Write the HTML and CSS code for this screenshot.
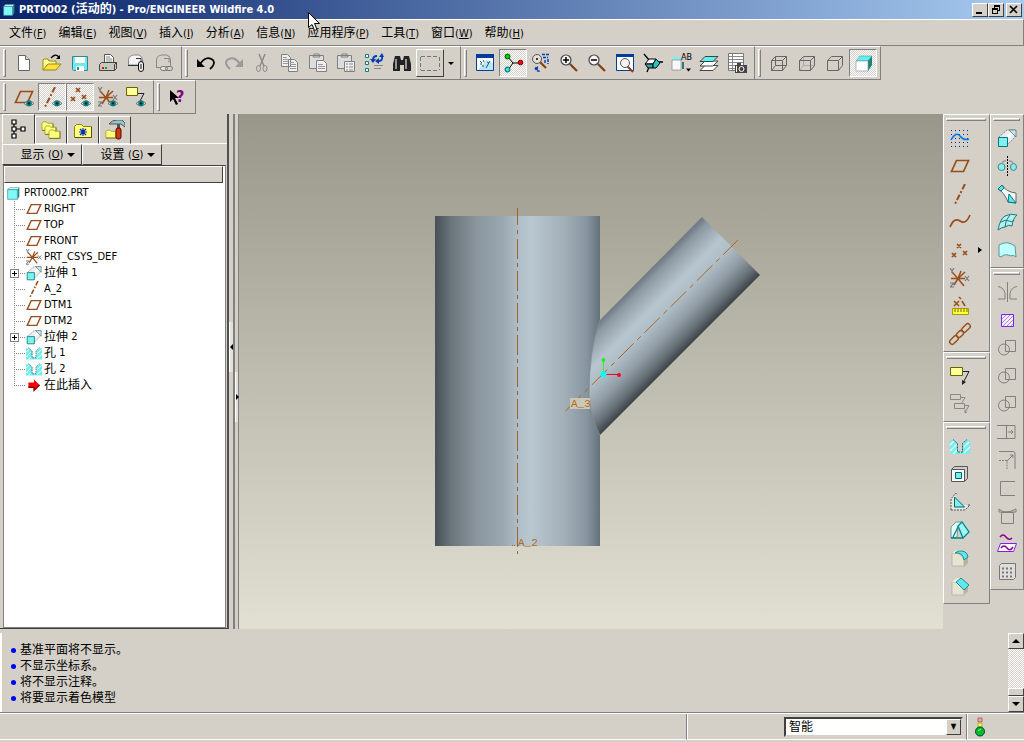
FILE: index.html
```html
<!DOCTYPE html>
<html lang="zh-CN">
<head>
    <meta charset="UTF-8">
    <meta name="viewport" content="width=device-width, initial-scale=1.0">
    <title>PRT0002 (活动的) - Pro/ENGINEER Wildfire 4.0</title>
    <link rel="stylesheet" href="styles.css">
</head>
<body>
    <!-- shared icons -->
    <svg class="sprites" aria-hidden="true">
        <symbol id="eye" viewBox="0 0 10 7"><path d="M0 3.5Q5-2 10 3.5Q5 8 0 3.5" fill="#c8dcd8" stroke="#555" stroke-width=".7"/><circle cx="5" cy="3.4" r="2.8" fill="#008080"/><circle cx="5" cy="3.4" r="1.2" fill="#002828"/></symbol>
        <symbol id="plane" viewBox="0 0 20 20"><path d="M6.500 4.500H18.500L13.500 15.500H1.500Z" fill="none" stroke="#994d1a" stroke-width="1.700"/></symbol>
        <symbol id="axis" viewBox="0 0 20 20"><path d="M15 0L5 20" fill="none" stroke="#994d1a" stroke-width="2" stroke-dasharray="6 2 2 2"/></symbol>
        <symbol id="points" viewBox="0 0 20 20"><path d="M7 2l4 4m0-4l-4 4M2 11l4 4m0-4l-4 4M13 9l4 4m0-4l-4 4" fill="none" stroke="#994d1a" stroke-width="1.700"/></symbol>
        <symbol id="csys" viewBox="0 0 20 20"><path d="M1 10.500H15M11 3L8 10.500L14 18M2 4L8 10.500L4 17M15 4L8 10.500" fill="none" stroke="#994d1a" stroke-width="1.500"/><path d="M0 0l2 3 2-3M2 3v2M15 8l4 5m0-5l-4 5M0 15h4l-4 4h4" fill="none" stroke="#777" stroke-width="1.200"/></symbol>
        <symbol id="note" viewBox="0 0 20 20"><path d="M.500 1.500h12v8h-12z" fill="#ffff99" stroke="#666600"/><path d="M13 5.500h6L13 17" fill="none" stroke="#222"/><path d="M12 19l0-5 4 2z" fill="#222"/></symbol>
        <symbol id="extrude" viewBox="0 0 20 20"><path d="M2 9l8-7h8v7l-7 7" fill="#e8eeee" stroke="#888" stroke-dasharray="2 1"/><path d="M11 9l6-6" stroke="#fff" stroke-width="3"/><path d="M12 2h7v7z" fill="#b8f0f0" stroke="#667" stroke-width=".8"/><path d="M1.500 9.500h9v9h-9z" fill="#80f0f0" stroke="#007878"/></symbol>
        <symbol id="hole" viewBox="0 0 20 20"><path d="M0 4h4l4 4v8h5V8l4-4h3v14H0z" fill="#70f0f0"/><path d="M0 9l4-4M0 15l7-7M3 18l4-4M14 11l5-5M14 17l6-6" stroke="#fff" stroke-width="1.200"/><path d="M3 3.500l4.500 4V16h5V7.500l4.500-4" fill="none" stroke="#356" stroke-dasharray="2 1"/></symbol>
        <symbol id="lens" viewBox="0 0 20 20"><path d="M11 11l7 7" stroke="#8b3a0e" stroke-width="2.200"/><path d="M11 11l2 2" stroke="#555" stroke-width="1.500"/><circle cx="7" cy="7" r="5" fill="#f4f4f4" stroke="#444" stroke-width="1.200"/></symbol>
        <symbol id="folder" viewBox="0 0 20 20"><path d="M1.500 17.500v-11l2-2h5l2 2h8v11z" fill="#ffff80" stroke="#888800"/><path d="M18.500 7v10.500H2" fill="none" stroke="#555500"/></symbol>
        <symbol id="pages" viewBox="0 0 20 20"><path d="M1.500 1.500h6l3 3v9h-9zM8.500 6.500h6l3 3v9h-9z" fill="#eee" stroke="#808080"/><path d="M3 4.500h4M3 6.500h5M3 8.500h5M3 10.500h5M10 9.500h4M10 11.500h6M10 13.500h6M10 15.500h6" stroke="#999"/></symbol>
        <symbol id="boolean" viewBox="0 0 20 20"><path d="M8.500 2.500h10v11h-10zM1.500 11.500a5.500 5.500 0 1 0 11 0a5.500 5.500 0 1 0-11 0" fill="none" stroke="#808080"/></symbol>
        <symbol id="cube" viewBox="0 0 20 20"><path d="M1 4l3-3h15l-3 3z" fill="#d8ffff" stroke="#388" stroke-width=".8"/><path d="M16 4l3-3v14l-3 4z" fill="#308888"/><path d="M1 4h15v15H1z" fill="#80f8f8" stroke="#388"/></symbol>
    </svg>

    <header class="titlebar">
        <svg class="app-icon" viewBox="0 0 20 20"><use href="#cube"/></svg>
        <h1>PRT0002 (<span>活动的</span>) - Pro/ENGINEER Wildfire 4.0</h1>
        <div class="window-buttons">
            <button aria-label="最小化"><svg viewBox="0 0 14 12"><path d="M3 8h6v2H3z"/></svg></button>
            <button aria-label="还原"><svg viewBox="0 0 14 12"><path d="M5 1h6v6H9V6h1V3H6v1H5zM3 4h6v6H3zm1 2v3h4V6z" fill-rule="evenodd"/></svg></button>
            <button aria-label="关闭" class="close"><svg viewBox="0 0 14 12"><path d="M3 2l7 7M10 2L3 9" stroke="#000" stroke-width="1.700"/></svg></button>
        </div>
    </header>

    <nav class="menubar">
        <a href="#">文件<span>(<u>F</u>)</span></a>
        <a href="#">编辑<span>(<u>E</u>)</span></a>
        <a href="#">视图<span>(<u>V</u>)</span></a>
        <a href="#">插入<span>(<u>I</u>)</span></a>
        <a href="#">分析<span>(<u>A</u>)</span></a>
        <a href="#">信息<span>(<u>N</u>)</span></a>
        <a href="#">应用程序<span>(<u>P</u>)</span></a>
        <a href="#">工具<span>(<u>T</u>)</span></a>
        <a href="#">窗口<span>(<u>W</u>)</span></a>
        <a href="#">帮助<span>(<u>H</u>)</span></a>
    </nav>

    <div class="toolbar-row">
        <div class="toolbar">
            <button class="tool" aria-label="新建"><svg viewBox="0 0 20 20"><path d="M4.500 2.500h7l4 4v11h-11z" fill="#fff" stroke="#666"/><path d="M11.500 2.500v4h4" fill="#ddd" stroke="#666"/></svg></button>
            <button class="tool" aria-label="打开"><svg viewBox="0 0 20 20"><path d="M1 17V7l1-1h4l1 2h7v3" fill="#ffff99" stroke="#998800"/><path d="M1 17l5-6h13l-5 6z" fill="#ffe040" stroke="#998800"/><path d="M9 5q4-5 8-1" fill="none" stroke="#000" stroke-width="1.300"/><path d="M14 6h4V2z"/></svg></button>
            <button class="tool" aria-label="保存"><svg viewBox="0 0 20 20"><path d="M2.500 3.500h15v14h-14l-1-1z" fill="#70e8f0" stroke="#388"/><path d="M5 4h10v6H5zM6 13h8v5H6z" fill="#fff"/><path d="M7 14h2v3H7z" fill="#388"/></svg></button>
            <button class="tool" aria-label="打印"><svg viewBox="0 0 20 20"><path d="M6.500 1.500h6l3 3v7h-9z" fill="#fff" stroke="#555"/><path d="M8 4h4M8 6h6M8 8h6" stroke="#888"/><path d="M1.500 11.500l2-2h15l-2 2v6h-15zM16.500 11.500l2-2v6l-2 2" fill="#c8c8c0" stroke="#444"/><path d="M4 14h2v2H4z" fill="#f00"/><path d="M7 14h2v2H7z" fill="#0a0"/></svg></button>
            <button class="tool" aria-label="发送邮件"><svg viewBox="0 0 20 20"><path d="M2.500 12V7q0-4 5-5h5q4 1 4 5v5z" fill="#f4f4f4" stroke="#888"/><path d="M2 12.500h11" stroke="#333"/><path d="M10 5.500h5v3" fill="none" stroke="#333"/><rect x="12.500" y="8.500" width="5" height="10" rx="2.500" fill="#eee" stroke="#111"/><path d="M15 11v5" stroke="#111"/></svg></button>
            <button class="tool" aria-label="发送链接"><svg viewBox="0 0 20 20"><path d="M2.500 14V7q0-4 5-5h5q4 1 4 5v6M2 14.500h6M10 5.500h5v4" fill="none" stroke="#888"/><rect x="6.500" y="13.500" width="7" height="4" rx="2" fill="#ddd" stroke="#777"/><rect x="11.500" y="13.500" width="7" height="4" rx="2" fill="none" stroke="#777"/></svg></button>
        </div>
        <div class="toolbar">
            <button class="tool" aria-label="撤消"><svg viewBox="0 0 20 20"><path d="M4 11Q10 2 17 7Q20 11 14 16" fill="none" stroke="#000" stroke-width="1.700"/><path d="M1 6v8h8z"/></svg></button>
            <button class="tool" aria-label="重做"><svg viewBox="0 0 20 20"><path d="M16 11Q10 2 3 7Q0 11 6 16" fill="none" stroke="#999" stroke-width="2"/><path d="M19 6v8h-8z" fill="#999"/></svg></button>
            <button class="tool" aria-label="剪切"><svg viewBox="0 0 20 20"><path d="M7 1l5 12M13 1L8 13" stroke="#888" stroke-width="1.400"/><ellipse cx="6.500" cy="15.500" rx="2" ry="3" fill="none" stroke="#888"/><ellipse cx="13" cy="15.500" rx="2" ry="3" fill="none" stroke="#888"/></svg></button>
            <button class="tool" aria-label="复制"><svg viewBox="0 0 20 20"><use href="#pages"/></svg></button>
            <button class="tool" aria-label="粘贴"><svg viewBox="0 0 20 20"><path d="M1.500 2.500h14v13h-14zM5 4l1-3h5l1 3z" fill="#ddd" stroke="#808080"/><path d="M8.500 7.500h7l3 3v8h-10z" fill="#eee" stroke="#808080"/><path d="M10 11.500h5M10 13.500h7M10 15.500h7" stroke="#999"/></svg></button>
            <button class="tool" aria-label="选择性粘贴"><svg viewBox="0 0 20 20"><path d="M1.500 2.500h14v13h-14zM5 4l1-3h5l1 3z" fill="#ddd" stroke="#808080"/><path d="M8.500 8.500h10v10h-10z" fill="#eee" stroke="#808080"/><path d="M10 11h2M10 14h2M10 17h2M13 11h4M13 14h4M13 17h4" stroke="#888"/></svg></button>
            <button class="tool" aria-label="再生"><svg viewBox="0 0 20 20"><path d="M1.500 1.500h3v3h-3zM1.500 8.500h3v3h-3zM1.500 15.500h3v3h-3z" fill="#fff" stroke="#008080"/><path d="M9 7q0-4 4-4M18 3q1 5-3 5" fill="none" stroke="#003cb4" stroke-width="1.800"/><path d="M6 6h6l-3 4zM15 5v6l-4-3zM15 4h5l-2-4z" fill="#003cb4"/><path d="M10 12.500h9M10 15.500h7" stroke="#888"/></svg></button>
            <button class="tool" aria-label="查找"><svg viewBox="0 0 20 20"><path d="M3 3h5l1 4h2l1-4h5l2 8v7h-7v-6H8v6H1v-7z" fill="#222"/><path d="M4 6v10M14 6v10" stroke="#bbb" stroke-width="1.500"/></svg></button>
            <button class="tool raised" aria-label="选取框"><svg viewBox="0 0 20 20"><path d="M1 3.500h18M1 17.500h18M.500 4v13M19.500 4v13" fill="none" stroke="#777" stroke-dasharray="4 2"/></svg></button>
            <button class="drop" aria-label="选取选项"><i class="arrow-down"></i></button>
        </div>
        <div class="toolbar">
            <button class="tool" aria-label="重画"><svg viewBox="0 0 20 20"><path d="M1.500 1.500h17v16h-17z" fill="#fff" stroke="#003ca0"/><path d="M1 1h18v4H1z" fill="#003ca0"/><path d="M3 17l8-10q6 2 7 4v6z" fill="#b8e8f8"/><path d="M5 8l2 2M8 7l1 2M11 15l4-7M5 11h2M12 9l2 1M7 13h2" stroke="#258"/></svg></button>
            <button class="tool pressed" aria-label="旋转中心"><svg viewBox="0 0 20 20"><path d="M5 4l5 6h8M10 10l-5 7" fill="none" stroke="#000"/><circle cx="4.500" cy="3.500" r="2.500" fill="#0c0" stroke="#050"/><circle cx="17.500" cy="9.500" r="2.300" fill="#f00" stroke="#700"/><circle cx="4.500" cy="16.500" r="2.500" fill="#3dd" stroke="#066"/></svg></button>
            <button class="tool" aria-label="定向模式"><svg viewBox="0 0 20 20"><path d="M9 9l6 6" stroke="#8b4010" stroke-width="2.200"/><circle cx="6" cy="6" r="4.500" fill="#e4e0d8" stroke="#555"/><circle cx="6" cy="6" r="1"/><path d="M11 1.500h7M12 4.500h5M17 6v5M14 7v3M5 14q-1 5 5 4" fill="none" stroke="#003cb4" stroke-width="1.400" stroke-dasharray="3 1"/><path d="M3 16l4-3v4z" fill="#003cb4"/></svg></button>
            <button class="tool" aria-label="放大"><svg viewBox="0 0 20 20"><use href="#lens"/><path d="M4 7h6M7 4v6" stroke="#000" stroke-width="1.500"/></svg></button>
            <button class="tool" aria-label="缩小"><svg viewBox="0 0 20 20"><use href="#lens"/><path d="M4 7h6" stroke="#000" stroke-width="1.500"/></svg></button>
            <button class="tool" aria-label="重新调整"><svg viewBox="0 0 20 20"><path d="M1.500 1.500h17v16h-17z" fill="#fff" stroke="#003ca0"/><path d="M1 1h18v3H1z" fill="#003ca0"/><path d="M12 13l6 6" stroke="#8b4010" stroke-width="2"/><circle cx="10" cy="10" r="4.500" fill="#f4f4f4" stroke="#555"/></svg></button>
            <button class="tool" aria-label="视图方向"><svg viewBox="0 0 20 20"><path d="M1 1l5 6M14 9h6M6 14l-2 5" stroke="#000" stroke-width="1.300"/><path d="M2 11l4-5h7l-3 5z" fill="#fff" stroke="#000"/><path d="M2 11h8v4H5z" fill="#40a0a0" stroke="#000"/><path d="M10 11l3-5 4 4-4 5h-3z" fill="#20c8c8" stroke="#000"/></svg></button>
            <button class="tool" aria-label="已命名的视图"><svg viewBox="0 0 20 20"><path d="M1 6l2-2h7v3H1z" fill="#80f0f0"/><path d="M1 7h9v10H1z" fill="#f8f8f8" stroke="#888" stroke-width=".7"/><path d="M12 9v7" stroke="#377" stroke-width="2"/><path d="M15 15.500h5l-2.500 3z"/><text x="10" y="7" class="tiny-text">AB</text></svg></button>
            <button class="tool" aria-label="层"><svg viewBox="0 0 20 20"><g stroke="#333" stroke-width=".9"><path d="M1 17.500l5-5h13l-5 5z" fill="#fff"/><path d="M1 13l5-5h13l-5 5z" fill="#fff"/><path d="M1 8.500l5-5h13l-5 5z" fill="#60f0f0"/></g></svg></button>
            <button class="tool" aria-label="视图管理器"><svg viewBox="0 0 20 20"><path d="M1.500 .500h15v17h-15z" fill="#fff" stroke="#777"/><path d="M2 3.500h14M2 6.500h14M2 9.500h14M2 12.500h6M2 15.500h6M5.500 1v16" stroke="#888"/><path d="M8 12h12v8H8zM10 10h4v2h-4z" fill="#444"/><circle cx="14.500" cy="16" r="2.500" fill="#444" stroke="#fff"/><path d="M9.500 13v6" stroke="#ffc"/></svg></button>
        </div>
        <div class="toolbar">
            <button class="tool" aria-label="线框"><svg viewBox="0 0 20 20"><path d="M2.500 7.500h11v10h-11zM6.500 3.500h11v9h-11zM2.500 7.500l4-4M13.500 7.500l4-4M13.500 17.500l4-5M2.500 17.500l4-5" fill="none" stroke="#666"/></svg></button>
            <button class="tool" aria-label="隐藏线"><svg viewBox="0 0 20 20"><path d="M6.500 4v8.500h11M2.500 17.500l4-5" fill="none" stroke="#aaa"/><path d="M2.500 7.500h11v10h-11zM2.500 7.500l4-4h11v9l-4 5M13.500 7.500l4-4" fill="none" stroke="#666"/></svg></button>
            <button class="tool" aria-label="无隐藏线"><svg viewBox="0 0 20 20"><path d="M2.500 7.500h11v10h-11zM2.500 7.500l4-4h11v9l-4 5M13.500 7.500l4-4" fill="none" stroke="#666"/></svg></button>
            <button class="tool pressed" aria-label="着色"><svg viewBox="0 0 20 20"><path d="M3 8l4-5h12l-4 5z" fill="#60f0f0" stroke="#599" stroke-width=".6"/><path d="M15 8l4-5v9l-4 6z" fill="#208080"/><path d="M3 8h12v10H3z" fill="#fff" stroke="#799" stroke-width=".6"/></svg></button>
        </div>
    </div>

    <div class="toolbar-row">
        <div class="toolbar">
            <button class="tool" aria-label="基准平面显示"><svg viewBox="0 0 20 20"><use href="#plane"/><use href="#eye" x="10" y="13" width="10" height="7"/></svg></button>
            <button class="tool pressed" aria-label="基准轴显示"><svg viewBox="0 0 20 20"><use href="#axis" x="-2" y="0" width="20" height="20"/><use href="#eye" x="10" y="13" width="10" height="7"/></svg></button>
            <button class="tool pressed" aria-label="基准点显示"><svg viewBox="0 0 20 20"><use href="#points" x="-1" y="-1" width="20" height="20"/><use href="#eye" x="11" y="13" width="10" height="7"/></svg></button>
            <button class="tool" aria-label="坐标系显示"><svg viewBox="0 0 20 20"><use href="#csys"/><use href="#eye" x="10" y="13" width="10" height="7"/></svg></button>
            <button class="tool" aria-label="注释显示"><svg viewBox="0 0 20 20"><path d="M.500 .500h11v8h-11z" fill="#ffff99" stroke="#666600"/><path d="M12 6.500h6L14 14" fill="none" stroke="#222"/><use href="#eye" x="10" y="13" width="10" height="7"/></svg></button>
        </div>
        <div class="toolbar">
            <button class="tool" aria-label="上下文帮助"><svg viewBox="0 0 20 20"><path d="M2 3v12l3-3 3 6 2-1-3-6h4z"/><text x="8" y="15" class="help-text">?</text></svg></button>
        </div>
    </div>

    <main class="workspace">
        <aside class="navigator">
            <div class="tabs">
                <button class="tab active" aria-label="模型树"><svg viewBox="0 0 20 20"><path d="M3 1h4v4H3zM3 8h4v4H3zM3 15h4v4H3zM12 8h4v4h-4zM7 10h5M5 5v3M5 12v3" fill="#fff" stroke="#000" stroke-width="1.200"/></svg></button>
                <button class="tab" aria-label="层树"><svg viewBox="0 0 20 20"><use href="#folder" x="0" y="-1" width="13" height="13"/><use href="#folder" x="3" y="3" width="13" height="13"/><use href="#folder" x="7" y="7" width="13" height="13"/></svg></button>
                <button class="tab" aria-label="文件夹浏览器"><svg viewBox="0 0 20 20"><use href="#folder"/><path d="M6 12h8M10 8v8M7 9l6 6M13 9l-6 6" stroke="#0028b4" stroke-width="1.200"/></svg></button>
                <button class="tab" aria-label="连接"><svg viewBox="0 0 20 20"><use href="#folder" x="0" y="7" width="12" height="13"/><path d="M4 4q3-4 8-4h5l3 3v4l-4-3H9z" fill="#90c8d0" stroke="#555"/><path d="M12 4h3v5h-3z" fill="#555"/><rect x="11" y="8" width="5" height="11" rx="2" fill="#c84010" stroke="#600"/></svg></button>
            </div>
            <div class="tree-menus">
                <button>显示 <span>(<u>O</u>)</span><i class="arrow-down big"></i></button>
                <button>设置 <span>(<u>G</u>)</span><i class="arrow-down big"></i></button>
            </div>
            <div class="tree-box">
                <div class="tree-header"></div>
                <ul class="tree">
                    <li class="root"><svg viewBox="0 0 20 20"><use href="#cube"/></svg>PRT0002.PRT</li>
                    <li><span class="branch"></span><svg viewBox="0 0 20 20"><use href="#plane"/></svg>RIGHT</li>
                    <li><span class="branch"></span><svg viewBox="0 0 20 20"><use href="#plane"/></svg>TOP</li>
                    <li><span class="branch"></span><svg viewBox="0 0 20 20"><use href="#plane"/></svg>FRONT</li>
                    <li><span class="branch"></span><svg viewBox="0 0 20 20"><use href="#csys"/></svg>PRT_CSYS_DEF</li>
                    <li><span class="branch"><button class="expand" aria-label="展开"></button></span><svg viewBox="0 0 20 20"><use href="#extrude"/></svg><b>拉伸</b> 1</li>
                    <li><span class="branch"></span><svg viewBox="0 0 20 20"><use href="#axis"/></svg>A_2</li>
                    <li><span class="branch"></span><svg viewBox="0 0 20 20"><use href="#plane"/></svg>DTM1</li>
                    <li><span class="branch"></span><svg viewBox="0 0 20 20"><use href="#plane"/></svg>DTM2</li>
                    <li><span class="branch"><button class="expand" aria-label="展开"></button></span><svg viewBox="0 0 20 20"><use href="#extrude"/></svg><b>拉伸</b> 2</li>
                    <li><span class="branch"></span><svg viewBox="0 0 20 20"><use href="#hole"/></svg><b>孔</b> 1</li>
                    <li><span class="branch"></span><svg viewBox="0 0 20 20"><use href="#hole"/></svg><b>孔</b> 2</li>
                    <li><span class="branch last"></span><svg viewBox="0 0 20 20"><path d="M3 7h7V3l7 7-7 7v-4H3z" fill="#f00"/><path d="M3 13h7v4l7-7" fill="none" stroke="#700" stroke-width="1.500"/></svg><b>在此插入</b></li>
                </ul>
            </div>
        </aside>

        <div class="splitter">
            <div class="strip left"><button aria-label="收起导航器"><svg viewBox="0 0 4 8"><path d="M4 0v8L0 4z"/></svg></button></div>
            <div class="strip right"><button aria-label="展开浏览器"><svg viewBox="0 0 4 8"><path d="M0 0v8l4-4z"/></svg></button></div>
        </div>

        <section class="viewport">
            <svg class="model" viewBox="239 114 704 515" role="img" aria-label="三维模型">
                <defs>
                    <linearGradient id="pipe">
                        <stop offset="0" stop-color="#485055"/><stop offset=".1" stop-color="#6b757b"/>
                        <stop offset=".25" stop-color="#8a959d"/><stop offset=".42" stop-color="#9ca9b3"/>
                        <stop offset=".52" stop-color="#b2c0ca"/><stop offset=".58" stop-color="#b9c7d1"/>
                        <stop offset=".78" stop-color="#a3b0b8"/><stop offset=".92" stop-color="#8795a0"/>
                        <stop offset="1" stop-color="#66727a"/>
                    </linearGradient>
                    <linearGradient id="arm" gradientUnits="userSpaceOnUse" x1="702" y1="217" x2="760" y2="275">
                        <stop offset="0" stop-color="#6c7780"/><stop offset=".1" stop-color="#8d9aa3"/>
                        <stop offset=".35" stop-color="#b7c5cf"/><stop offset=".5" stop-color="#b0bec8"/>
                        <stop offset=".7" stop-color="#939fa8"/><stop offset=".88" stop-color="#667077"/>
                        <stop offset="1" stop-color="#3b4347"/>
                    </linearGradient>
                </defs>
                <path d="M435 216H600V546H435Z" fill="url(#pipe)"/>
                <path d="M702 217L760 275L600 435Q591 420 589 395Q589 350 600 320Z" fill="url(#arm)"/>
                <path d="M600 320Q589 350 589 395Q591 420 600 435" fill="none" stroke="#7f8d98" stroke-width=".8"/>
                <path d="M517.500 208V554" stroke="#a0662c" stroke-dasharray="17 5 4 5 20 4 4 4 20 4 4 4 20 4 4 4 20 4 4 4 20 4 4 4 20 4 4 4 20 4 4 4 20 4 4 4 20 4 4 4 20 4 4 4"/>
                <path d="M565.500 411L738 240" stroke="#a8661f" stroke-dasharray="22 5 5 5"/>
                <path d="M570 398h20v11h-20z" fill="#ccc6b6"/>
                <text x="571" y="407" class="axis-label">A_3</text>
                <text x="518" y="546" class="axis-label">A_2</text>
                <path d="M512 545.500h4" stroke="#a8661f" stroke-dasharray="1 1"/>
                <path d="M603.500 374V360" stroke="#3e3"/><circle cx="603.500" cy="360" r="2" fill="#2e2"/>
                <path d="M604 374.500h15" stroke="#f02"/><circle cx="619" cy="375" r="2" fill="#f02"/>
                <circle cx="603.500" cy="374.500" r="3" fill="#0ff"/>
            </svg>
        </section>

        <div class="side-column wide">
            <div class="side-bar">
                <button class="tool" aria-label="草绘"><svg viewBox="0 0 20 20"><path d="M1 2.500h18M1 6.500h18M1 10.500h18M1 14.500h18M1 18.500h18" stroke="#0028a0" stroke-dasharray="1 3"/><path d="M1 12q5-9 9-4t9 3" fill="none" stroke="#0078f0" stroke-width="1.500"/></svg></button>
                <button class="tool" aria-label="基准平面"><svg viewBox="0 0 20 20"><use href="#plane"/></svg></button>
                <button class="tool" aria-label="基准轴"><svg viewBox="0 0 20 20"><use href="#axis"/></svg></button>
                <button class="tool" aria-label="基准曲线"><svg viewBox="0 0 20 20"><path d="M0 15Q4 5 10 9T20 3" fill="none" stroke="#994d1a" stroke-width="1.600"/></svg></button>
                <div class="tool-pair"><button class="tool" aria-label="基准点"><svg viewBox="0 0 20 20"><use href="#points" y="2" width="20" height="20"/></svg></button><button class="flyout" aria-label="更多基准点"><svg viewBox="0 0 4 6"><path d="M0 0v6l4-3z"/></svg></button></div>
                <button class="tool" aria-label="坐标系"><svg viewBox="0 0 20 20"><use href="#csys"/></svg></button>
                <button class="tool" aria-label="分析特征"><svg viewBox="0 0 20 20"><path d="M4 5l5 5m0-5l-5 5M9 1l2 2M12 5l3 5" stroke="#994d1a" stroke-width="1.500"/><path d="M2.500 12.500h16v6h-16z" fill="#ffff40" stroke="#aa9900"/><path d="M5 13v3M8 13v3M11 13v3M14 13v3M17 13v3" stroke="#660"/></svg></button>
                <button class="tool" aria-label="参照"><svg viewBox="0 0 20 20"><g fill="none" stroke="#994d1a" stroke-width="1.400"><rect x="-5" y="-2.500" width="10" height="5" rx="2.500" transform="translate(4 16) rotate(-45)"/><rect x="-4" y="-2.500" width="8" height="5" rx="2.500" transform="translate(10 10) rotate(-45)"/><rect x="-5" y="-2.500" width="10" height="5" rx="2.500" transform="translate(16 4) rotate(-45)"/></g></svg></button>
            </div>
            <div class="side-bar">
                <button class="tool" aria-label="注释"><svg viewBox="0 0 20 20"><use href="#note"/></svg></button>
                <button class="tool" aria-label="注释传播"><svg viewBox="0 0 20 20"><path d="M.500 .500h10v5h-10zM4.500 9.500h10v5h-10zM11 3.500h4l-3 5M15 11.500h4l-4 7m0-3v3h2" fill="none" stroke="#888"/></svg></button>
            </div>
            <div class="side-bar">
                <button class="tool" aria-label="孔"><svg viewBox="0 0 20 20"><use href="#hole"/></svg></button>
                <button class="tool" aria-label="壳"><svg viewBox="0 0 20 20"><path d="M1.500 5.500l3-3h13v12l-3 3" fill="#ccc" stroke="#555"/><path d="M1.500 5.500h13v12h-13z" fill="#fff" stroke="#555"/><path d="M5.500 8.500h6v6h-6z" fill="#70f0f0" stroke="#066"/></svg></button>
                <button class="tool" aria-label="筋"><svg viewBox="0 0 20 20"><path d="M1 18V7l5-6v12h13l-4 5z" fill="#e6e6e0"/><path d="M1 18V7l5-6v2M1 18h14l5-5h-3" fill="none" stroke="#555" stroke-dasharray="2 1"/><path d="M4.500 5l10 10h-10z" fill="#80f0f0" stroke="#066"/></svg></button>
                <button class="tool" aria-label="拔模"><svg viewBox="0 0 20 20"><path d="M1 18V7l5-5h6l-4 4-1 11z" fill="#eafafa" stroke="#699"/><path d="M8 6l4-4 7 10-6 6z" fill="#a0f4f4" stroke="#088" stroke-width="1.300"/><path d="M1 18h12M8 7l-5 10" fill="none" stroke="#088" stroke-width="1.300"/></svg></button>
                <button class="tool" aria-label="倒圆角"><svg viewBox="0 0 20 20"><path d="M2 5q8-1 12 6v7H2z" fill="#e6e4d0" stroke="#aaa" stroke-width=".7"/><path d="M14 11l4-2v6l-4 4z" fill="#b4b29c"/><path d="M2 5l5-3h5l-4 3z" fill="#f2f0e0"/><path d="M8 3q9-1 10 6l-4 3q-1-8-9-7z" fill="#60e8f0" stroke="#077" stroke-width=".8"/></svg></button>
                <button class="tool" aria-label="倒角"><svg viewBox="0 0 20 20"><path d="M2 6h4l8 7v6H2z" fill="#e6e4d0" stroke="#aaa" stroke-width=".7"/><path d="M14 13l4-4v6l-4 4z" fill="#b4b29c"/><path d="M2 6l5-4h4L7 6z" fill="#f2f0e0"/><path d="M11 2l8 7-5 5-8-8z" fill="#60e8f0" stroke="#077" stroke-width=".8"/></svg></button>
            </div>
        </div>

        <div class="side-column">
            <div class="side-bar">
                <button class="tool" aria-label="拉伸"><svg viewBox="0 0 20 20"><use href="#extrude"/></svg></button>
                <button class="tool" aria-label="旋转"><svg viewBox="0 0 20 20"><path d="M10.500 0v20" stroke="#000" stroke-dasharray="2 1"/><path d="M5 7q1-3 4-2M16 7q-1-3-4-2" fill="#aaa" stroke="#888"/><circle cx="4.500" cy="11" r="3.500" fill="#80f0f0" stroke="#488"/><ellipse cx="16.500" cy="11" rx="3" ry="3.500" fill="#80f0f0" stroke="#488"/></svg></button>
                <button class="tool" aria-label="可变截面扫描"><svg viewBox="0 0 20 20"><path d="M5 1q4 7 14 8v10L11 18Q7 8 1 5z" fill="#f4f8f8" stroke="#666"/><path d="M1 5l4-4 2 3-3 3zM11 18l1-8 7 9z" fill="#60e8e8" stroke="#077"/></svg></button>
                <button class="tool" aria-label="边界混合"><svg viewBox="0 0 20 20"><path d="M1 18Q3 7 8 4q5-3 12-1-4 3-5 11-3-2-7 1-3 0-7 3" fill="#b0f4f4" stroke="#277"/><path d="M13 3Q8 8 8 15M4 10q5-3 8-1t5-1" fill="none" stroke="#277"/></svg></button>
                <button class="tool" aria-label="造型"><svg viewBox="0 0 20 20"><path d="M2 5q8-5 16 1l1 11q-3-3-5-1-6-3-10 1l-2-1z" fill="#c0ffff" stroke="#599"/></svg></button>
            </div>
            <div class="side-bar">
                <button class="tool" aria-label="镜像"><svg viewBox="0 0 20 20"><path d="M10.500 0v20M1 4.500q6 1 7 7V17H1M20 4.500q-6 1-7 7V17h7" fill="none" stroke="#808080"/></svg></button>
                <button class="tool" aria-label="填充"><svg viewBox="0 0 20 20"><path d="M4.500 4.500h12v12h-12z" fill="#eee" stroke="#8020f0"/><path d="M5 9l4-4M5 13l8-8M6 16L16 6M10 16l6-6M14 16l2-2" stroke="#a8f"/></svg></button>
                <button class="tool" aria-label="合并"><svg viewBox="0 0 20 20"><use href="#boolean"/></svg></button>
                <button class="tool" aria-label="相交"><svg viewBox="0 0 20 20"><use href="#boolean"/></svg></button>
                <button class="tool" aria-label="修剪"><svg viewBox="0 0 20 20"><use href="#boolean"/></svg></button>
                <button class="tool" aria-label="延伸"><svg viewBox="0 0 20 20"><path d="M0 3.500h18v13H0M9.500 4v12M11 10h5m-2-2l2 2-2 2" fill="none" stroke="#808080"/></svg></button>
                <button class="tool" aria-label="偏移"><svg viewBox="0 0 20 20"><path d="M2 1.500h14q2 0 2 2V19" fill="none" stroke="#808080"/><path d="M2 10.500h8V19" fill="none" stroke="#808080" stroke-dasharray="2 1"/><path d="M10 11l6-6m-3 0h3v3" fill="none" stroke="#808080"/></svg></button>
                <button class="tool" aria-label="投影"><svg viewBox="0 0 20 20"><path d="M18 3.500H3.500v14H18" fill="none" stroke="#808080"/></svg></button>
                <button class="tool" aria-label="加厚"><svg viewBox="0 0 20 20"><path d="M4.500 6.500h12v11h-12zM2 3q6 6 17 0v3H2z" fill="#d4d0c8" stroke="#808080"/></svg></button>
                <button class="tool" aria-label="包络"><svg viewBox="0 0 20 20"><path d="M.500 17.500l3-8h16l-3 8z" fill="#fff" stroke="#8020f0"/><path d="M3 3q3-4 6 0t6 1M4 14q3-4 6 0t6-1" fill="none" stroke="#900090" stroke-width="1.500"/></svg></button>
                <button class="tool" aria-label="阵列"><svg viewBox="0 0 20 20"><path d="M2.500 3.500l2-2h14v14l-2 2h-14z" fill="#ddd" stroke="#777"/><path d="M5 6.500h11M5 10.500h11M5 14.500h11" stroke="#777" stroke-width="2" stroke-dasharray="2 2"/></svg></button>
            </div>
        </div>
    </main>

    <section class="messages">
        <ul>
            <li>基准平面将不显示。</li>
            <li>不显示坐标系。</li>
            <li>将不显示注释。</li>
            <li>将要显示着色模型</li>
        </ul>
        <div class="scrollbar">
            <button aria-label="向上滚动"><i class="arrow-up"></i></button>
            <div class="track"></div>
            <div class="thumb"></div>
            <button aria-label="向下滚动"><i class="arrow-down big"></i></button>
        </div>
    </section>

    <footer class="statusbar">
        <div class="filter">
            <select aria-label="选取过滤器"><option>智能</option></select>
        </div>
        <div class="regen">
            <svg viewBox="0 0 12 20"><path d="M4 1h4v4H4z" fill="#f8a0a0" stroke="#a66"/><path d="M4 6h4v4H4z" fill="#ff4" stroke="#aa4"/><circle cx="6" cy="14.500" r="4.500" fill="#0b3" stroke="#042"/><path d="M4 14l3-2" stroke="#8f8"/></svg>
        </div>
    </footer>

    <svg class="cursor" viewBox="0 0 12 20"><path d="M.500 .500v15l3.500-3 2.500 6 2.500-1-2.500-6h5z" fill="#fff" stroke="#000"/></svg>
</body>
</html>
```

FILE: styles.css
```css
*, *::before, *::after {
    box-sizing: border-box;
}
body {
    margin: 0;
    min-height: 100vh;
    display: flex;
    flex-direction: column;
    background-color: #d4d0c8;
    color: #000;
    font-family: "DejaVu Sans Condensed", "Noto Sans CJK SC", sans-serif;
    font-size: 11px;
    line-height: 16px;
}
button {
    padding: 0;
    border: none;
    background: none;
    color: inherit;
    font: inherit;
}
ul {
    margin: 0;
    padding: 0;
    list-style: none;
}
svg {
    display: block;
    flex: none;
}
.sprites {
    display: none;
}

/* title bar */
.titlebar {
    display: flex;
    align-items: center;
    height: 19px;
    padding: 0 2px 0 3px;
    background: linear-gradient(to right, #0a246a, #a6caf0);
    color: #fff;
}
.app-icon {
    width: 12px;
    height: 12px;
}
.titlebar h1 {
    flex: 1;
    margin: 0 0 0 4px;
    font-size: 11px;
    font-weight: bold;
    line-height: 18px;
}
.titlebar h1 span {
    font-size: 12px;
}
.window-buttons {
    display: flex;
}
.window-buttons button {
    width: 16px;
    height: 14px;
    background-color: #d4d0c8;
    border: 1px solid;
    border-color: #fff #404040 #404040 #fff;
}
.window-buttons .close {
    margin-left: 2px;
}
.window-buttons svg {
    width: 14px;
    height: 12px;
}

/* menu */
.menubar {
    display: flex;
    align-items: center;
    gap: 12px;
    height: 27px;
    padding: 2px 0 0 9px;
    border-top: 1px solid #fff;
    border-right: 1px solid #808080;
    border-bottom: 1px solid #808080;
}
.menubar a {
    color: #000;
    font-size: 12px;
    text-decoration: none;
    white-space: nowrap;
}
.menubar span, .tree-menus span {
    font-size: 11px;
}

/* toolbars */
.toolbar-row {
    display: flex;
    height: 34px;
}
.toolbar {
    display: flex;
    align-items: center;
    padding-right: 3px;
    border: 1px solid;
    border-color: #fff #808080 #808080 #fff;
    border-left-width: 0;
}
.toolbar::before {
    content: "";
    width: 3px;
    height: 28px;
    margin: 0 4px 0 3px;
    border: 1px solid;
    border-color: #fff #808080 #808080 #fff;
}
.tool {
    display: flex;
    flex: none;
    align-items: center;
    justify-content: center;
    width: 28px;
    height: 28px;
}
.tool svg {
    width: 20px;
    height: 20px;
    overflow: visible;
}
.tool.pressed {
    border: 1px solid;
    border-color: #808080 #fff #fff #808080;
    background: repeating-conic-gradient(#fff 0 25%, #d4d0c8 0 50%) 0 0 / 2px 2px;
}
.tool.raised {
    border: 1px solid;
    border-color: #fff #404040 #404040 #fff;
}
.tiny-text {
    font-size: 9px;
}
.help-text {
    font-size: 16px;
    font-weight: bold;
    fill: #800080;
}
.drop {
    display: flex;
    align-items: center;
    justify-content: center;
    width: 13px;
    height: 28px;
}
.arrow-down, .arrow-up {
    display: inline-block;
    border: 3px solid transparent;
    border-top-color: #000;
    border-bottom-width: 0;
}
.arrow-down.big {
    border-width: 4px 4px 0;
}
.arrow-up {
    border-width: 0 4px 4px;
    border-bottom-color: #000;
}

/* navigator */
.workspace {
    display: flex;
    flex: 1;
}
.navigator {
    display: flex;
    flex: none;
    flex-direction: column;
    width: 229px;
    padding-left: 2px;
    border-right: 2px solid #505050;
    border-bottom: 1px solid #404040;
}
.tabs {
    display: flex;
    align-items: flex-end;
    height: 30px;
}
.tab {
    display: flex;
    align-items: center;
    justify-content: center;
    width: 32px;
    height: 28px;
    border: 1px solid;
    border-color: #fff #404040 #fff #fff;
}
.tab.active {
    width: 33px;
    height: 30px;
    border-bottom-color: transparent;
}
.tabs::after {
    content: "";
    flex: 1;
    border-bottom: 1px solid #fff;
}
.tab svg {
    width: 20px;
    height: 20px;
}
.tree-menus {
    display: flex;
    height: 21px;
}
.tree-menus button {
    display: flex;
    align-items: center;
    justify-content: center;
    width: 80px;
    padding-left: 12px;
    border: 1px solid;
    border-color: #fff #404040 #404040 #fff;
    font-size: 12px;
    white-space: pre;
}
.tree-menus i {
    margin-left: 4px;
}
.tree-box {
    flex: 1;
    margin: 0 1px 0 1px;
    border: 1px solid #808080;
    border-top-color: #404040;
    background-color: #fff;
}
.tree-header {
    height: 17px;
    margin-right: 2px;
    border: 1px solid;
    border-color: #fff #404040 #404040 #fff;
    background-color: #d4d0c8;
}
.tree {
    padding: 2px 0 0 4px;
}
.tree li {
    display: flex;
    align-items: center;
    height: 16px;
    white-space: pre;
}
.tree b {
    font-size: 12px;
    font-weight: normal;
}
.tree svg {
    width: 16px;
    height: 16px;
    margin-right: 2px;
}
.tree .root svg {
    width: 13px;
    height: 13px;
    margin: 0 4px 0 -1px;
}
.branch {
    display: flex;
    align-items: center;
    width: 18px;
    height: 16px;
    padding-left: 2px;
    background:
        repeating-linear-gradient(to bottom, #808080 0 1px, transparent 1px 2px) 6px 0 / 1px 100% no-repeat,
        repeating-linear-gradient(to right, #808080 0 1px, transparent 1px 2px) 6px 8px / 12px 1px no-repeat;
}
.branch.last {
    background-size: 1px 8px, 12px 1px;
}
.expand {
    width: 9px;
    height: 9px;
    border: 1px solid #808080;
    background:
        linear-gradient(#000, #000) center / 5px 1px no-repeat,
        linear-gradient(#000, #000) center / 1px 5px no-repeat,
        #fff;
}

/* splitter */
.splitter {
    display: flex;
    flex: none;
    width: 10px;
}
.strip {
    display: flex;
    flex-direction: column;
    justify-content: center;
    width: 5px;
    border-right: 1px solid #808080;
}
.strip.left {
    padding-bottom: 50px;
}
.strip.right {
    padding-top: 50px;
    border-left: 1px solid #808080;
}
.strip button {
    display: flex;
    align-items: center;
    height: 50px;
    border-left: 1px solid #fff;
    background-color: #e4e1da;
}
.strip svg {
    width: 3px;
    height: 8px;
}

/* model view */
.viewport {
    flex: 1;
    min-width: 0;
    background: linear-gradient(#99978a, #e2e0d2);
}
.model {
    width: 100%;
    height: 100%;
}
.axis-label {
    font-family: "Liberation Mono", monospace;
    font-size: 11px;
    fill: #b06a1c;
}

/* feature toolbars */
.side-column {
    flex: none;
    width: 34px;
}
.side-column.wide {
    width: 47px;
}
.side-bar {
    padding: 3px 3px 3px 2px;
    border: 1px solid;
    border-color: #fff #808080 #808080 #fff;
}
.side-bar::before {
    content: "";
    display: block;
    height: 3px;
    margin-bottom: 3px;
    border: 1px solid;
    border-color: #fff #808080 #808080 #fff;
}
.tool-pair {
    display: flex;
    align-items: center;
}
.flyout {
    padding: 4px;
}
.flyout svg {
    width: 4px;
    height: 6px;
}

/* message log */
.messages {
    display: flex;
    height: 84px;
    padding-top: 4px;
    border-bottom: 1px solid #808080;
}
.messages ul {
    flex: 1;
    padding: 9px 0 0 9px;
    border-left: 2px solid #fff;
    font-size: 12px;
}
.messages li {
    display: flex;
    align-items: center;
    gap: 4px;
    height: 16px;
}
.messages li::before {
    content: "";
    width: 5px;
    height: 5px;
    border-radius: 50%;
    background-color: #00f;
}
.scrollbar {
    display: flex;
    flex-direction: column;
    width: 16px;
}
.scrollbar button, .thumb {
    display: flex;
    align-items: center;
    justify-content: center;
    height: 16px;
    border: 1px solid;
    border-color: #fff #404040 #404040 #fff;
    background-color: #d4d0c8;
}
.scrollbar .thumb {
    height: 8px;
}
.track {
    flex: 1;
    background: repeating-conic-gradient(#fff 0 25%, #d4d0c8 0 50%) 0 0 / 2px 2px;
}

/* status bar */
.statusbar {
    display: flex;
    justify-content: flex-end;
    height: 29px;
    padding-bottom: 2px;
    border-top: 1px solid #fff;
}
.statusbar::before {
    content: "";
    flex: 1;
    border-bottom: 1px solid #fff;
}
.filter {
    display: flex;
    align-items: center;
    justify-content: flex-end;
    width: 281px;
    padding-right: 3px;
    border-left: 1px solid #808080;
    border-right: 1px solid #808080;
    border-bottom: 1px solid #fff;
    box-shadow: inset 1px 0 #fff;
}
.filter select {
    width: 179px;
    height: 20px;
    padding: 0 20px 0 3px;
    border: 2px solid;
    border-color: #404040 #d4d0c8 #d4d0c8 #404040;
    border-radius: 0;
    appearance: none;
    background-color: #fff;
    color: #000;
    font: inherit;
    font-size: 12px;
    line-height: 16px;
}
.filter::after {
    content: "▼";
    width: 15px;
    height: 16px;
    margin-left: -17px;
    margin-right: 2px;
    border: 1px solid;
    border-color: #fff #404040 #404040 #fff;
    background-color: #d4d0c8;
    font-size: 8px;
    line-height: 14px;
    text-align: center;
    pointer-events: none;
}
.regen {
    width: 57px;
    padding: 3px 0 0 6px;
    border-left: 1px solid #fff;
    border-bottom: 1px solid #fff;
}
.regen svg {
    width: 12px;
    height: 20px;
}

/* mouse pointer */
.cursor {
    position: absolute;
    left: 308px;
    top: 12px;
    width: 12px;
    height: 20px;
}
```
